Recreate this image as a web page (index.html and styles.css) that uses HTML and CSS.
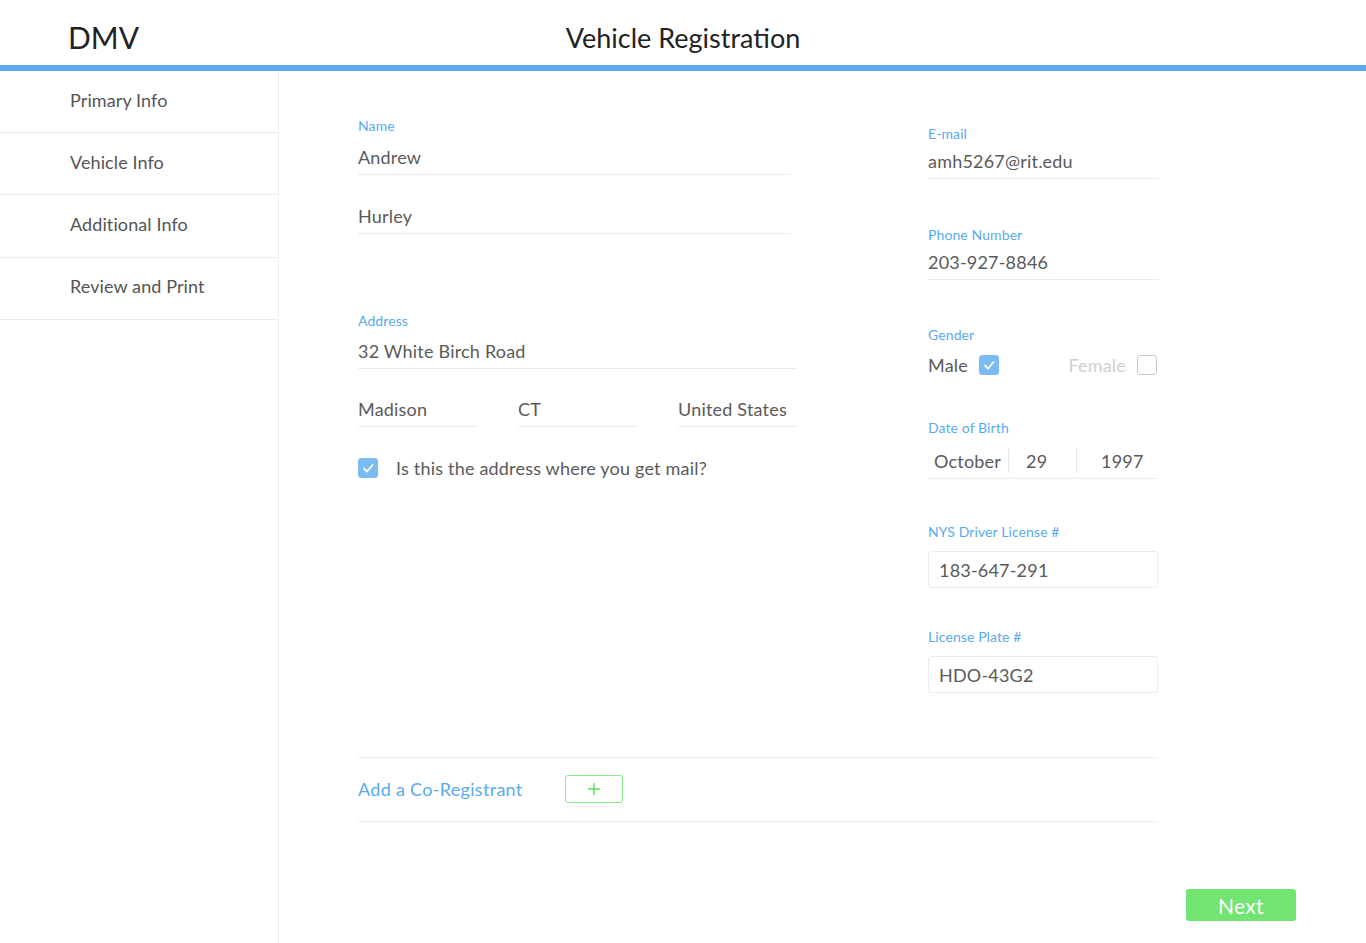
FILE: index.html
```html
<!DOCTYPE html>
<html lang="en">
<head>
<meta charset="utf-8">
<title>DMV - Vehicle Registration</title>
<link rel="stylesheet" href="styles.css">
</head>
<body>
<header class="topbar">
  <div class="brand">DMV</div>
  <h1 class="page-title">Vehicle Registration</h1>
  <div class="spacer"></div>
</header>
<div class="layout">
  <nav class="sidebar">
    <a class="nav-item">Primary Info</a>
    <a class="nav-item">Vehicle Info</a>
    <a class="nav-item">Additional Info</a>
    <a class="nav-item">Review and Print</a>
  </nav>
  <main class="main">
    <div class="form">
      <div class="col-left">
        <div class="label">Name</div>
        <div class="value line name-line">Andrew</div>
        <div class="value line name-line gap-28">Hurley</div>

        <div class="label address-label">Address</div>
        <div class="value line">32 White Birch Road</div>
        <div class="city-row">
          <div class="value line">Madison</div>
          <div class="value line">CT</div>
          <div class="value line">United States</div>
        </div>
        <div class="check-row">
          <span class="checkbox checked"><svg viewBox="0 0 20 20" width="20" height="20"><path d="M6 10.5 L9 13.5 L14.5 7" fill="none" stroke="#fff" stroke-width="1.8" stroke-linecap="round" stroke-linejoin="round"/></svg></span>
          <span class="check-text">Is this the address where you get mail?</span>
        </div>
      </div>

      <div class="col-right">
        <div class="label">E-mail</div>
        <div class="value line">amh5267@rit.edu</div>

        <div class="label mt-48">Phone Number</div>
        <div class="value line">203-927-8846</div>

        <div class="label mt-47">Gender</div>
        <div class="gender-row">
          <div class="gender-opt">
            <span class="value">Male</span>
            <span class="checkbox checked"><svg viewBox="0 0 20 20" width="20" height="20"><path d="M6 10.5 L9 13.5 L14.5 7" fill="none" stroke="#fff" stroke-width="1.8" stroke-linecap="round" stroke-linejoin="round"/></svg></span>
          </div>
          <div class="gender-opt">
            <span class="value muted">Female</span>
            <span class="checkbox"></span>
          </div>
        </div>

        <div class="label mt-43">Date of Birth</div>
        <div class="dob line">
          <span class="dob-seg seg-month">October</span>
          <span class="dob-seg seg-day">29</span>
          <span class="dob-seg seg-year">1997</span>
        </div>

        <div class="label mt-45 box-label">NYS Driver License #</div>
        <div class="value boxed">183-647-291</div>

        <div class="label mt-41 box-label">License Plate #</div>
        <div class="value boxed">HDO-43G2</div>
      </div>
    </div>

    <div class="coreg">
      <span class="coreg-text">Add a Co-Registrant</span>
      <button class="add-btn" type="button"><svg viewBox="0 0 14 14" width="14" height="14"><path d="M7 1 V13 M1 7 H13" stroke="#5fe05f" stroke-width="1.4" fill="none"/></svg></button>
    </div>

    <div class="actions">
      <button class="next-btn" type="button">Next</button>
    </div>
  </main>
</div>
</body>
</html>
```
FILE: styles.css
```css
* { box-sizing: border-box; }
html, body { margin: 0; padding: 0; }
body {
  font-family: "Lato", "Open Sans", sans-serif;
  color: #555;
  background: #fff;
  min-height: 100vh;
  display: flex;
  flex-direction: column;
}
.topbar {
  height: 71px;
  border-bottom: 6px solid #5eabf0;
  display: grid;
  grid-template-columns: 1fr auto 1fr;
  align-items: center;
}
.brand {
  padding-left: 68px;
  font-size: 30px;
  color: #222;
  padding-top: 8px;
}
.page-title {
  margin: 0;
  font-weight: 400;
  font-size: 27px;
  color: #222;
  padding-top: 10px;
}
.layout {
  flex: 1;
  display: flex;
}
.sidebar {
  width: 279px;
  border-right: 1px solid #eeeeee;
  display: flex;
  flex-direction: column;
}
.nav-item {
  height: 62.3px;
  display: flex;
  align-items: center;
  padding-left: 70px;
  border-bottom: 1px solid #ececec;
  font-size: 18px;
  color: #555;
  padding-bottom: 4px;
  letter-spacing: 0.1px;
}
.nav-item:first-child { height: 62px; }
.main {
  flex: 1;
  padding: 47px 0 0 79px;
  display: flex;
  flex-direction: column;
}
.form {
  display: flex;
  gap: 131px;
}
.col-left { width: 439px; }
.col-right { width: 231px; padding-top: 8px; }
.label {
  font-size: 14px;
  line-height: 16px;
  color: #5aaaf0;
  margin-bottom: 11px;
  letter-spacing: 0.1px;
}
.col-right .label { margin-bottom: 7px; }
.col-right .box-label { margin-bottom: 11px; }
.value {
  font-size: 18px;
  line-height: 24px;
  color: #5a5a5a;
  letter-spacing: 0.2px;
}
.line {
  padding-bottom: 5px;
  border-bottom: 1px solid #ebebeb;
}
.name-line { width: 433px; }
.gap-28 { margin-top: 29px; }
.address-label { margin-top: 79px; margin-bottom: 10px; }
.city-row {
  display: grid;
  grid-template-columns: 119px 119px 119px;
  column-gap: 41px;
  margin-top: 28px;
}
.check-row {
  margin-top: 30px;
  display: flex;
  align-items: center;
  gap: 18px;
}
.check-text { font-size: 18px; color: #5a5a5a; letter-spacing: 0.2px; }
.checkbox {
  width: 20px;
  height: 20px;
  border-radius: 3px;
  border: 1px solid #c8c8c8;
  display: inline-block;
  flex: none;
}
.checkbox svg { display: block; margin: -1px; }
.checkbox.checked {
  background: #7dbbf3;
  border-color: #7dbbf3;
}
.mt-48 { margin-top: 48px; }
.mt-47 { margin-top: 47px; }
.mt-43 { margin-top: 43px; }
.mt-45 { margin-top: 45px; }
.mt-41 { margin-top: 41px; }
.col-right .gender-row {
  display: flex;
  justify-content: space-between;
  margin-top: 10px;
  padding-right: 2px;
}
.gender-opt {
  display: flex;
  align-items: center;
  gap: 11px;
}
.muted { color: #cfcfcf; }
.col-right .dob {
  display: flex;
  margin-top: 13px;
  font-size: 18px;
  line-height: 24px;
  color: #5a5a5a;
  letter-spacing: 0.2px;
  width: 229px;
}
.dob-seg { display: block; }
.seg-month { width: 81px; padding-left: 6px; border-right: 1px solid #e6e6e6; }
.seg-day { width: 68px; padding-left: 17px; border-right: 1px solid #e6e6e6; }
.seg-year { padding-left: 24px; }
.boxed {
  height: 37px;
  width: 230px;
  border: 1px solid #ececec;
  border-radius: 3px;
  padding: 5px 10px;
  line-height: 26px;
}
.coreg {
  width: 800px;
  margin-top: 64px;
  height: 65px;
  border-top: 1px solid #ececec;
  border-bottom: 1px solid #ececec;
  display: flex;
  align-items: center;
}
.coreg-text {
  width: 207px;
  font-size: 18px;
  color: #5aaaf0;
  letter-spacing: 0.3px;
  padding-bottom: 2px;
}
.add-btn {
  width: 58px;
  height: 28px;
  border: 1px solid #88ec88;
  border-radius: 3px;
  background: #fff;
  display: flex;
  align-items: center;
  justify-content: center;
  padding: 0;
  margin-top: -1px;
}
.add-btn svg { display: block; }
.actions {
  display: flex;
  justify-content: flex-end;
  padding-right: 70px;
  margin-top: 67px;
}
.next-btn {
  width: 110px;
  height: 32px;
  border: none;
  border-radius: 3px;
  background: #72e473;
  color: #fff;
  font-family: "Lato", "Open Sans", sans-serif;
  font-size: 21px;
  padding: 0;
  letter-spacing: 0.3px;
}
```
